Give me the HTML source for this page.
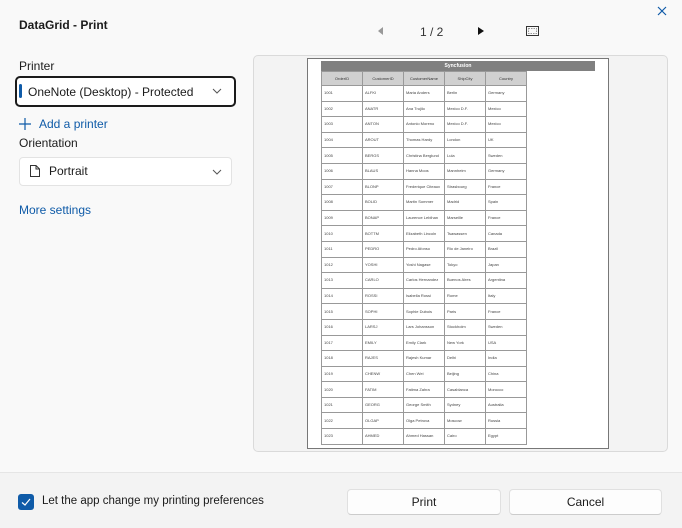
<!DOCTYPE html>
<html><head><meta charset="utf-8"><style>
*{box-sizing:border-box;margin:0;padding:0}
body{width:682px;height:528px;background:#f9f9f9;font-family:"Liberation Sans",sans-serif;position:relative;overflow:hidden;color:#1b1b1b}
.a{position:absolute}
.lbl{font-size:12px;color:#1b1b1b}
.blue{color:#0f5ba8;font-size:12px}
table{border-collapse:collapse;position:absolute;left:321px;top:71px;font-size:4px;color:#444}
td{border:1px solid #999;height:15.6px;padding-left:2px;width:41px;background:#fff;line-height:4px}
th{border:1px solid #999;height:14px;background:#d0d0d0;font-weight:normal;width:41px;color:#333}
</style></head><body>
<div class="a" style="left:19px;top:18px;font-size:12px;font-weight:bold">DataGrid - Print</div>
<svg class="a" style="left:656px;top:5px" width="12" height="12"><path d="M2 2L10 10M10 2L2 10" stroke="#0f5ba8" stroke-width="1.2"/></svg>
<div class="a lbl" style="left:19px;top:59px">Printer</div>
<div class="a" style="left:15px;top:76px;width:221px;height:31px;border:2px solid #1b1b1b;border-radius:5px;background:#fff"></div>
<div class="a" style="left:19px;top:84px;width:3px;height:14px;background:#0f5ba8;border-radius:2px"></div>
<div class="a" style="left:28px;top:85px;font-size:12px">OneNote (Desktop) - Protected</div>
<svg class="a" style="left:212px;top:88px" width="10" height="6"><path d="M1 1L5 5L9 1" stroke="#555" fill="none"/></svg>
<svg class="a" style="left:19px;top:118px" width="12" height="12"><path d="M6 0V12M0 6H12" stroke="#0f5ba8" stroke-width="1.2"/></svg>
<div class="a blue" style="left:39px;top:117px">Add a printer</div>
<div class="a lbl" style="left:19px;top:136px">Orientation</div>
<div class="a" style="left:19px;top:157px;width:213px;height:29px;border:1px solid #e3e3e3;border-radius:4px;background:#fff"></div>
<svg class="a" style="left:29px;top:164px" width="12" height="14"><path d="M1.5 1.5H7L10.5 5V12.5H1.5Z M7 1.5V5H10.5" stroke="#333" fill="none"/></svg>
<div class="a" style="left:49px;top:164px;font-size:12px">Portrait</div>
<svg class="a" style="left:212px;top:169px" width="10" height="6"><path d="M1 1L5 5L9 1" stroke="#555" fill="none"/></svg>
<div class="a blue" style="left:19px;top:203px">More settings</div>
<svg class="a" style="left:378px;top:27px" width="6" height="8"><path d="M5 0V8L0 4Z" fill="#999"/></svg>
<div class="a" style="left:420px;top:25px;font-size:12px;color:#333">1 / 2</div>
<svg class="a" style="left:478px;top:27px" width="6" height="8"><path d="M0 0V8L6 4Z" fill="#111"/></svg>
<svg class="a" style="left:526px;top:26px" width="13" height="10"><rect x="0.5" y="0.5" width="12" height="9" fill="none" stroke="#333"/><rect x="2.5" y="2.5" width="8" height="5" fill="none" stroke="#999" stroke-dasharray="1.5 1"/></svg>
<div class="a" style="left:253px;top:55px;width:415px;height:397px;border:1px solid #dadada;border-radius:5px;background:#f3f3f3"></div>
<div class="a" style="left:307px;top:58px;width:302px;height:391px;border:1px solid #777;background:#fff"></div>
<div class="a" style="left:321px;top:61px;width:274px;height:10px;background:#808080;color:#fff;font-size:5px;font-weight:bold;text-align:center;line-height:10px">Syncfusion</div>
<table>
<tr><th>OrderID</th><th>CustomerID</th><th>CustomerName</th><th>ShipCity</th><th>Country</th></tr>
<tr><td>1001</td><td>ALFKI</td><td>Maria Anders</td><td>Berlin</td><td>Germany</td></tr>
<tr><td>1002</td><td>ANATR</td><td>Ana Trujilo</td><td>Mexico D.F.</td><td>Mexico</td></tr>
<tr><td>1003</td><td>ANTON</td><td>Antonio Moreno</td><td>Mexico D.F.</td><td>Mexico</td></tr>
<tr><td>1004</td><td>AROUT</td><td>Thomas Hardy</td><td>London</td><td>UK</td></tr>
<tr><td>1005</td><td>BERGS</td><td>Christina Berglund</td><td>Lula</td><td>Sweden</td></tr>
<tr><td>1006</td><td>BLAUS</td><td>Hanna Moos</td><td>Mannheim</td><td>Germany</td></tr>
<tr><td>1007</td><td>BLONP</td><td>Frederique Citeaux</td><td>Strasbourg</td><td>France</td></tr>
<tr><td>1008</td><td>BOLID</td><td>Martin Sommer</td><td>Madrid</td><td>Spain</td></tr>
<tr><td>1009</td><td>BONAP</td><td>Laurence Lebihan</td><td>Marseille</td><td>France</td></tr>
<tr><td>1010</td><td>BOTTM</td><td>Elizabeth Lincoln</td><td>Tsawassen</td><td>Canada</td></tr>
<tr><td>1011</td><td>PEDRO</td><td>Pedro Afonso</td><td>Rio de Janeiro</td><td>Brazil</td></tr>
<tr><td>1012</td><td>YOSHI</td><td>Yoshi Nagase</td><td>Tokyo</td><td>Japan</td></tr>
<tr><td>1013</td><td>CARLO</td><td>Carlos Hernandez</td><td>Buenos Aires</td><td>Argentina</td></tr>
<tr><td>1014</td><td>ROSSI</td><td>Isabella Rossi</td><td>Rome</td><td>Italy</td></tr>
<tr><td>1015</td><td>SOPHI</td><td>Sophie Dubois</td><td>Paris</td><td>France</td></tr>
<tr><td>1016</td><td>LARSJ</td><td>Lars Johansson</td><td>Stockholm</td><td>Sweden</td></tr>
<tr><td>1017</td><td>EMILY</td><td>Emily Clark</td><td>New York</td><td>USA</td></tr>
<tr><td>1018</td><td>RAJES</td><td>Rajesh Kumar</td><td>Delhi</td><td>India</td></tr>
<tr><td>1019</td><td>CHENW</td><td>Chen Wei</td><td>Beijing</td><td>China</td></tr>
<tr><td>1020</td><td>FATIM</td><td>Fatima Zahra</td><td>Casablanca</td><td>Morocco</td></tr>
<tr><td>1021</td><td>GEORG</td><td>George Smith</td><td>Sydney</td><td>Australia</td></tr>
<tr><td>1022</td><td>OLGAP</td><td>Olga Petrova</td><td>Moscow</td><td>Russia</td></tr>
<tr><td>1023</td><td>AHMED</td><td>Ahmed Hassan</td><td>Cairo</td><td>Egypt</td></tr>
</table>
<div class="a" style="left:0;top:472px;width:682px;height:56px;background:#f3f3f3;border-top:1px solid #e5e5e5"></div>
<div class="a" style="left:18px;top:494px;width:16px;height:16px;background:#0f5ba8;border-radius:3px"></div>
<svg class="a" style="left:18px;top:494px" width="16" height="16"><path d="M4 8.5L7 11L12 5" stroke="#fff" fill="none" stroke-width="1.2"/></svg>
<div class="a" style="left:42px;top:495px;font-size:11.5px">Let the app change my printing preferences</div>
<div class="a" style="left:347px;top:489px;width:154px;height:26px;border:1px solid #e0e0e0;border-bottom-color:#ccc;border-radius:4px;background:#fdfdfd;font-size:12px;text-align:center;line-height:24px">Print</div>
<div class="a" style="left:509px;top:489px;width:153px;height:26px;border:1px solid #e0e0e0;border-bottom-color:#ccc;border-radius:4px;background:#fdfdfd;font-size:12px;text-align:center;line-height:24px">Cancel</div>
</body></html>
